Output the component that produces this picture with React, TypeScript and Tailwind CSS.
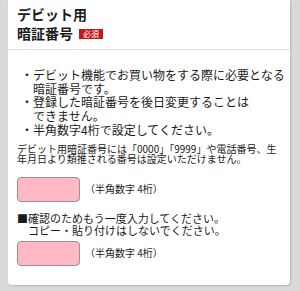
import React from "react";

// Bullet line with hanging indent
const Bullet: React.FC<{ children: React.ReactNode }> = ({ children }) => (
  <li className="flex">
    <span className="w-[12px] shrink-0 text-center">・</span>
    <span className="whitespace-nowrap">{children}</span>
  </li>
);

// Pink PIN input with hint
const PinField: React.FC = () => (
  <div className="flex items-center">
    <input
      type="password"
      inputMode="numeric"
      maxLength={4}
      className="w-[63px] h-[25px] rounded-[4px] border border-[#a58d92] bg-[#ffb8c6] outline-none"
    />
    <span className="ml-[5px] text-[10px] leading-[12px] text-[#222]">（半角数字 4桁）</span>
  </div>
);

const App: React.FC = () => {
  return (
    <div
      className="w-[300px] h-[291px] bg-[#dadada] pl-[8px] pr-[10px] overflow-hidden"
      style={{ fontFamily: '"Noto Sans CJK JP", "Noto Sans", sans-serif' }}
    >
      <div className="bg-white rounded-b-[4px] shadow-[1px_1px_2px_rgba(0,0,0,0.18)] pb-[19px] text-[#1a1a1a]">
        {/* Header */}
        <div className="pl-[9px] pt-[5px] pb-[6px] border-b border-[#e2e2e2]">
          <div className="text-[14px] leading-[19px] font-bold">デビット用</div>
          <div className="flex items-center text-[14px] leading-[19px] font-bold">
            <span>暗証番号</span>
            <span className="ml-[6px] mt-[1px] bg-[#c4161c] text-white text-[8px] leading-[10px] font-normal px-[4px]">
              必須
            </span>
          </div>
        </div>

        <div className="pl-[9px]">
          {/* Notes */}
          <ul className="mt-[18px] pl-[4px] text-[12px] leading-[13.7px]">
            <Bullet>
              デビット機能でお買い物をする際に必要となる
              <br />
              暗証番号です。
            </Bullet>
            <Bullet>
              登録した暗証番号を後日変更することは
              <br />
              できません。
            </Bullet>
            <Bullet>半角数字4桁で設定してください。</Bullet>
          </ul>

          <p className="mt-[7px] text-[10px] leading-[10.5px] whitespace-nowrap">
            デビット用暗証番号には「0000」「9999」や電話番号、生
            <br />
            年月日より類推される番号は設定いただけません。
          </p>

          <div className="mt-[12px]">
            <PinField />
          </div>

          {/* Confirmation */}
          <div className="mt-[10px] text-[11px] leading-[12px] whitespace-nowrap">
            <div>■確認のためもう一度入力してください。</div>
            <div className="pl-[11px]">コピー・貼り付けはしないでください。</div>
          </div>

          <div className="mt-[5px]">
            <PinField />
          </div>
        </div>
      </div>
    </div>
  );
};

export default App;
